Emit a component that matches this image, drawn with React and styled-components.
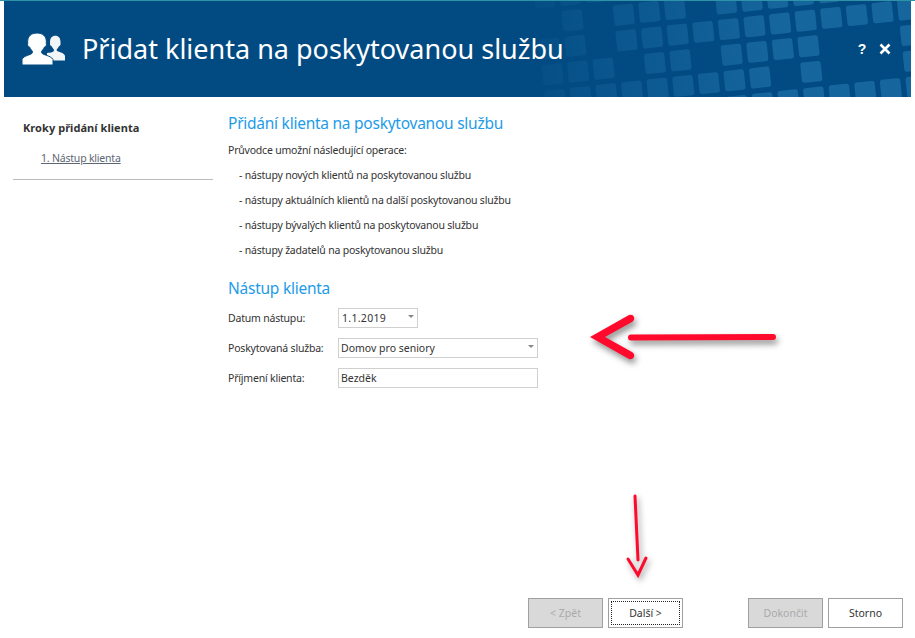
import React from "react";
import styled, { createGlobalStyle } from "styled-components";

const GlobalStyle = createGlobalStyle`
  html, body {
    margin: 0;
    padding: 0;
    background: #fff;
  }
`;

// tile rows of the header pattern: j = row, list = columns that are filled
const tileRows = [
  [-2, [-10, -9, -8]],
  [-1, [-9, -7, -6, -5, -3, -2, -1, 0, 1]],
  [0, [-10, -9, -7, -6, -5, -4, -3, -2, -1, 0, 1, 2, 3, 4]],
  [1, [-10, -9, -8, -6, -5, -3, -2, -1, 0, 4]],
  [2, [-10, -9, -8, -7, -6, -5, -4, -3, -2, 0, 4]],
  [3, [-6, -5, -4, -3, -2, -1, 0, 1, 2, 3, 4]],
];

function HeaderTiles() {
  const tiles = [];
  tileRows.forEach(([j, cols]) => {
    cols.forEach((i) => {
      // centres in header coords (header starts at x=4, y=1)
      const cx = 801.7 + 25.6 * i + 2.8 * j;
      const cy = 19.7 - 2.8 * i + 25.6 * j;
      tiles.push(
        <rect
          key={j + "_" + i}
          x={cx - 10.2}
          y={cy - 10.2}
          width="20.4"
          height="20.4"
          rx="2.5"
          fill="url(#tileFade)"
          transform={`rotate(-6 ${cx} ${cy})`}
        />
      );
    });
  });
  return (
    <TilesSvg width="907" height="96" viewBox="0 0 907 96">
      <defs>
        <linearGradient id="tileFade" gradientUnits="userSpaceOnUse" x1="530" y1="0" x2="780" y2="0">
          <stop offset="0" stopColor="#1a6ba3" stopOpacity="0.1" />
          <stop offset="1" stopColor="#1a6ba3" stopOpacity="0.85" />
        </linearGradient>
      </defs>
      {tiles}
    </TilesSvg>
  );
}

function PeopleIcon() {
  return (
    <svg width="44" height="32" viewBox="0 0 44 32">
      <path
        fill="#fff"
        opacity="0.95"
        d="M25 27.5V20c4-.6 7-.8 7-2.8 0-1.4-1.6-2-2.3-4-1.5-.4-1.9-1.6-1.6-3-.5-5 2-7.4 5.2-7.4s5.6 2.4 5.2 7.4c.3 1.4-.1 2.6-1.6 3-.7 2-2.3 2.6-2.3 4 0 1.6 7 1.6 8.4 5.6v4.7z"
      />
      <path
        fill="#fff"
        stroke="#024b82"
        strokeWidth="1"
        d="M0 32v-5.5c1.4-4.5 10.5-4.3 10.5-7.3 0-1.6-2-2.7-3-5.2-1.7-.5-2.2-2-1.8-3.7C5 3 9.5 0 15 0s10 3 9.3 10.3c.4 1.7-.1 3.2-1.8 3.7-1 2.5-3 3.6-3 5.2 0 3 9.100 2.800 11.500 7.300V32z"
      />
    </svg>
  );
}

export default function App() {
  return (
    <Page>
      <GlobalStyle />
      <Banner>
        <HeaderTiles />
        <BannerIcon>
          <PeopleIcon />
        </BannerIcon>
        <BannerTitle>Přidat klienta na poskytovanou službu</BannerTitle>
        <WindowButtons>
          <HelpMark>?</HelpMark>
          <svg width="12" height="12" viewBox="0 0 12 12">
            <path d="M1.500 1.500l9 9M10.500 1.500l-9 9" stroke="#fff" strokeWidth="2.600" />
          </svg>
        </WindowButtons>
      </Banner>

      <Body>
        <Sidebar>
          <SideTitle>Kroky přidání klienta</SideTitle>
          <SideStep>1. Nástup klienta</SideStep>
          <SideRule />
        </Sidebar>

        <Content>
          <Heading>Přidání klienta na poskytovanou službu</Heading>
          <Intro>Průvodce umožní následující operace:</Intro>
          <Operations>
            <li>- nástupy nových klientů na poskytovanou službu</li>
            <li>- nástupy aktuálních klientů na další poskytovanou službu</li>
            <li>- nástupy bývalých klientů na poskytovanou službu</li>
            <li>- nástupy žadatelů na poskytovanou službu</li>
          </Operations>

          <SubHeading>Nástup klienta</SubHeading>
          <Form>
            <FormRow>
              <FieldLabel>Datum nástupu:</FieldLabel>
              <Field $width={80} $indent={3} $tracking={0.3}>
                1.1.2019
                <Caret />
              </Field>
            </FormRow>
            <FormRow>
              <FieldLabel>Poskytovaná služba:</FieldLabel>
              <Field $width={200}>
                Domov pro seniory
                <Caret />
              </Field>
            </FormRow>
            <FormRow>
              <FieldLabel>Příjmení klienta:</FieldLabel>
              <Field $width={200}>Bezděk</Field>
            </FormRow>
          </Form>
        </Content>
      </Body>

      <Footer>
        <ButtonGroup>
          <WizardButton disabled>&lt; Zpět</WizardButton>
          <WizardButton $focused>Další &gt;</WizardButton>
        </ButtonGroup>
        <ButtonGroup>
          <WizardButton disabled>Dokončit</WizardButton>
          <WizardButton>Storno</WizardButton>
        </ButtonGroup>
      </Footer>

      {/* red arrows painted over the screenshot */}
      <LeftArrow width="200" height="60" viewBox="0 0 200 60">
        <path d="M5 27 L44 5 Q48 4 49 7 Q50 10 47 12 L20 27 L47 42 Q50 44 49 47 Q47 50 44 49 Z" fill="#ff0a2c" />
        <path d="M46 27.500 L188 27" stroke="#ff0a2c" strokeWidth="6" strokeLinecap="round" fill="none" />
      </LeftArrow>
      <DownArrow width="30" height="90" viewBox="0 0 30 90">
        <path d="M10 2 L13 66" stroke="#ff0a2c" strokeWidth="3" strokeLinecap="round" fill="none" />
        <path d="M3 65 L13 81 L21 64" stroke="#ff0a2c" strokeWidth="3" strokeLinecap="round" fill="none" />
      </DownArrow>
    </Page>
  );
}

const Page = styled.div`
  position: relative;
  width: 915px;
  height: 638px;
  box-sizing: border-box;
  border-top: 1px solid #2f93a8;
  display: flex;
  flex-direction: column;
  overflow: hidden;
  font-family: "Noto Sans", "Liberation Sans", sans-serif;
  font-size: 10.5px;
  letter-spacing: -0.2px;
  color: #333;
`;

const Banner = styled.div`
  position: relative;
  flex: none;
  margin: 0 4px;
  height: 96px;
  background: #024b82;
  display: flex;
  align-items: center;
  overflow: hidden;
`;

const TilesSvg = styled.svg`
  position: absolute;
  left: 0;
  top: 0;
`;

const BannerIcon = styled.div`
  position: relative;
  display: flex;
  margin-left: 18px;
  width: 60px;
  margin-top: -1px;
`;

const BannerTitle = styled.h1`
  position: relative;
  margin: 0;
  font-weight: 400;
  font-size: 27px;
  line-height: 36px;
  letter-spacing: 0;
  color: #fff;
  white-space: nowrap;
`;

const WindowButtons = styled.div`
  position: relative;
  margin-left: auto;
  margin-right: 20px;
  display: flex;
  align-items: center;
  gap: 13px;
`;

const HelpMark = styled.span`
  font-family: "Liberation Sans", sans-serif;
  font-weight: 700;
  font-size: 14px;
  line-height: 14px;
  color: #fff;
`;

const Body = styled.div`
  flex: none;
  display: flex;
  gap: 15px;
  padding-left: 13px;
`;

const Sidebar = styled.div`
  width: 200px;
  padding-top: 21px;
`;

const SideTitle = styled.div`
  padding-left: 10px;
  font-size: 11px;
  letter-spacing: 0.05px;
  line-height: 20px;
  font-weight: 700;
  color: #333;
`;

const SideStep = styled.div`
  margin-top: 10px;
  padding-left: 28px;
  line-height: 20px;
  color: #5d6675;
  text-decoration: underline;
`;

const SideRule = styled.div`
  margin-top: 11px;
  height: 1px;
  background: #bbb;
`;

const Content = styled.div`
  flex: 1;
  padding-top: 14px;
`;

const Heading = styled.h2`
  margin: 0;
  font-weight: 400;
  font-size: 15.5px;
  letter-spacing: -0.25px;
  line-height: 24px;
  color: #1e9be8;
`;

const SubHeading = styled(Heading)`
  margin-top: 13px;
`;

const Intro = styled.p`
  margin: 5px 0 3px;
  line-height: 20px;
`;

const Operations = styled.ul`
  margin: 0;
  padding: 0 0 0 11px;
  list-style: none;

  li {
    line-height: 25px;
  }
`;

const Form = styled.div`
  margin-top: 8px;
  display: flex;
  flex-direction: column;
  gap: 10px;
`;

const FormRow = styled.div`
  display: flex;
  align-items: center;
  height: 20px;
`;

const FieldLabel = styled.label`
  width: 110px;
`;

const Field = styled.div`
  position: relative;
  box-sizing: border-box;
  width: ${(p) => p.$width}px;
  height: 20px;
  padding-left: ${(p) => p.$indent || 2}px;
  border: 1px solid #d0d0d0;
  line-height: 18px;
  letter-spacing: ${(p) => p.$tracking || 0}px;
  color: #333;
`;

const Caret = styled.span`
  position: absolute;
  right: 3px;
  top: 6px;
  width: 0;
  height: 0;
  border-left: 3.5px solid transparent;
  border-right: 3.5px solid transparent;
  border-top: 3.5px solid #888;
`;

const Footer = styled.div`
  margin-top: auto;
  padding: 0 12px 10px 0;
  display: flex;
  justify-content: flex-end;
  gap: 65px;
`;

const ButtonGroup = styled.div`
  display: flex;
  gap: 5px;
`;

const WizardButton = styled.button`
  position: relative;
  box-sizing: border-box;
  width: 75px;
  height: 30px;
  padding: 0;
  border: 1px solid #a0a0a0;
  background: #fff;
  font-family: inherit;
  font-size: 10.5px;
  letter-spacing: 0;
  color: #333;

  &:disabled {
    background: #d9d9d9;
    color: #aaa;
  }

  ${(p) =>
    p.$focused &&
    `
    &::after {
      content: "";
      position: absolute;
      inset: 2px;
      border: 1px dotted #222;
    }
  `}
`;

const LeftArrow = styled.svg`
  position: absolute;
  left: 585px;
  top: 309px;
  filter: drop-shadow(2px 4px 3px rgba(0, 0, 0, 0.45));
`;

const DownArrow = styled.svg`
  position: absolute;
  left: 625px;
  top: 493px;
  filter: drop-shadow(2px 3px 3px rgba(0, 0, 0, 0.4));
`;
